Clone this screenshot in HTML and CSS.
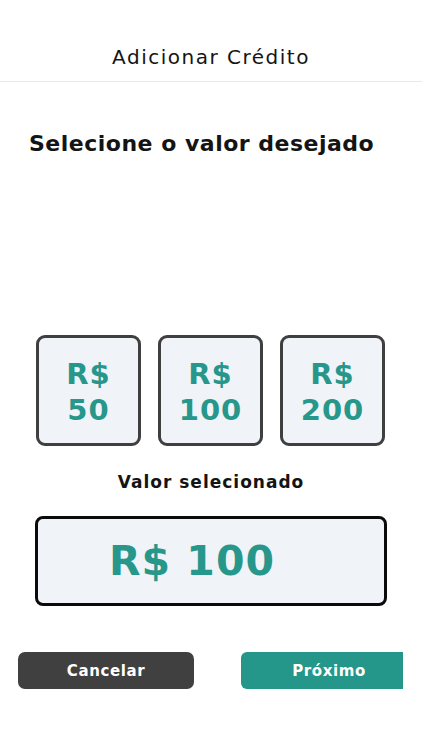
FILE: index.html
```html
<!DOCTYPE html>
<html lang="pt-BR">
	<head>
		<meta charset="UTF-8">
		<meta name="viewport" content="width=device-width, initial-scale=1.0">
		<title>Adicionar Crédito</title>
		<link rel="stylesheet" href="styles.css">
	</head>
	<body>
		<header class="topbar">
			<h1>Adicionar Crédito</h1>
		</header>
		<main>
			<h2 class="question">Selecione o valor desejado</h2>

			<div class="options">
				<button class="option" type="button">R$<br>50</button>
				<button class="option" type="button">R$<br>100</button>
				<button class="option" type="button">R$<br>200</button>
			</div>

			<p class="label">Valor selecionado</p>
			<div class="selected">R$ 100</div>

			<div class="actions">
				<button class="btn btn-cancel" type="button">Cancelar</button>
				<button class="btn btn-next" type="button">Próximo</button>
			</div>
		</main>
	</body>
</html>
```
FILE: styles.css
```css
body{
	margin: 0;
	background-color: #fff;
	font-family: "DejaVu Sans", sans-serif;
	color: #141414;
}
.topbar{
	height: 82px;
	border-bottom: 1px solid #e9e9e9;
	display: flex;
	justify-content: center;
	box-sizing: border-box;
}
.topbar h1{
	margin: 43px 0 0;
	font-size: 20px;
	font-weight: 400;
	letter-spacing: 1.5px;
	line-height: 28px;
}
main{
	display: flex;
	flex-direction: column;
	padding: 0 18px;
}
.question{
	margin: 47px 0 0 11px;
	font-size: 22px;
	font-weight: 700;
	letter-spacing: 0.5px;
	line-height: 30px;
}
.options{
	display: flex;
	gap: 17px;
	margin: 176px 0 0 18px;
}
.option{
	appearance: none;
	width: 105px;
	height: 111px;
	border: 3px solid #3f3f3f;
	border-radius: 9px;
	background-color: #f0f3f8;
	color: #26978a;
	font-family: "DejaVu Sans", sans-serif;
	font-size: 29px;
	font-weight: 700;
	letter-spacing: 1px;
	line-height: 36px;
	padding: 2px 0 0;
}
.label{
	margin: 24px 0 0;
	text-align: center;
	font-size: 17px;
	font-weight: 700;
	letter-spacing: 1px;
	line-height: 24px;
}
.selected{
	margin: 22px 0 0 17px;
	width: 352px;
	height: 90px;
	box-sizing: border-box;
	border: 3px solid #0b0b0b;
	border-radius: 8px;
	background-color: #f0f3f8;
	color: #26978a;
	font-size: 41px;
	font-weight: 700;
	letter-spacing: 1px;
	display: flex;
	align-items: center;
	padding-left: 71px;
}
.actions{
	display: flex;
	gap: 47px;
	width: 385px;
	overflow: hidden;
	margin-top: 46px;
}
.btn{
	appearance: none;
	flex: none;
	width: 176px;
	height: 37px;
	border: none;
	color: #fff;
	font-family: "DejaVu Sans", sans-serif;
	font-size: 15px;
	font-weight: 700;
	letter-spacing: 0.6px;
	padding: 0;
}
.btn-cancel{
	background-color: #404040;
	border-radius: 7px;
}
.btn-next{
	background-color: #24968a;
	border-radius: 6px;
}
```
